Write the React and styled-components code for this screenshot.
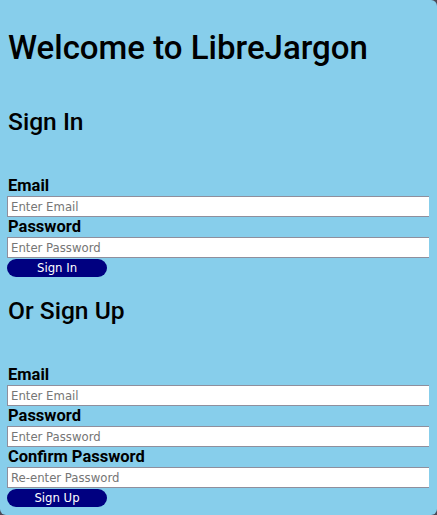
import React from "react";
import styled, {createGlobalStyle} from "styled-components";

const GlobalStyle = createGlobalStyle`
    html, body {
        margin: 0;
        padding: 0;
        background: #4a4a58;
    }
    * {
        box-sizing: border-box;
    }
`;

export default function App() {
    return (
        <>
            <GlobalStyle/>
            <Page>
                <Title>Welcome to LibreJargon</Title>

                <SectionTitle>Sign In</SectionTitle>
                <Form onSubmit={e => e.preventDefault()}>
                    <Label>Email</Label>
                    <Input type="email" placeholder="Enter Email"/>
                    <Label>Password</Label>
                    <Input type="password" placeholder="Enter Password"/>
                    <Button type="submit">Sign In</Button>
                </Form>

                <SectionTitle>Or Sign Up</SectionTitle>
                <Form onSubmit={e => e.preventDefault()}>
                    <Label>Email</Label>
                    <Input type="email" placeholder="Enter Email"/>
                    <Label>Password</Label>
                    <Input type="password" placeholder="Enter Password"/>
                    <Label>Confirm Password</Label>
                    <Input type="password" placeholder="Re-enter Password"/>
                    <Button type="submit">Sign Up</Button>
                </Form>
            </Page>
        </>
    );
}

const Page = styled.div`
    min-height: 100vh;
    display: flex;
    flex-direction: column;
    align-items: stretch;
    padding: 0 8px 0 7px;
    background-color: #87ceeb;
    border-radius: 0 6px 6px 6px;
    font-family: Roboto, "Liberation Sans", sans-serif;
    color: #000;
`;

const Title = styled.h1`
    margin: 29px 0 21px 1px;
    font-size: 33px;
    font-weight: 500;
    line-height: 38px;
`;

const SectionTitle = styled.h2`
    margin: 19px 0 0 1px;
    font-size: 24.6px;
    font-weight: 500;
    line-height: 29px;
`;

const Form = styled.form`
    display: flex;
    flex-direction: column;
    align-items: flex-start;
    margin-top: 40px;
`;

const Label = styled.label`
    display: block;
    margin-left: 1px;
    font-size: 16.5px;
    font-weight: 700;
    line-height: 20px;
`;

const Input = styled.input`
    display: block;
    width: 100%;
    height: 21px;
    margin: 0;
    padding: 0 3px;
    border: 1px solid #8f8f9d;
    border-right: none;
    border-radius: 0;
    background: #fff;
    font-family: "DejaVu Sans Condensed", "DejaVu Sans", sans-serif;
    font-stretch: condensed;
    font-size: 13px;
    outline: none;

    ::placeholder {
        color: #7a7078;
    }
`;

const Button = styled.button`
    width: 100px;
    height: 18px;
    margin: 1px 0 0;
    padding: 0;
    border: none;
    border-radius: 9px;
    background-color: #000080;
    color: #fff;
    font-family: "DejaVu Sans Condensed", "DejaVu Sans", sans-serif;
    font-stretch: condensed;
    font-size: 13px;
    line-height: 18px;
    cursor: pointer;
`;
